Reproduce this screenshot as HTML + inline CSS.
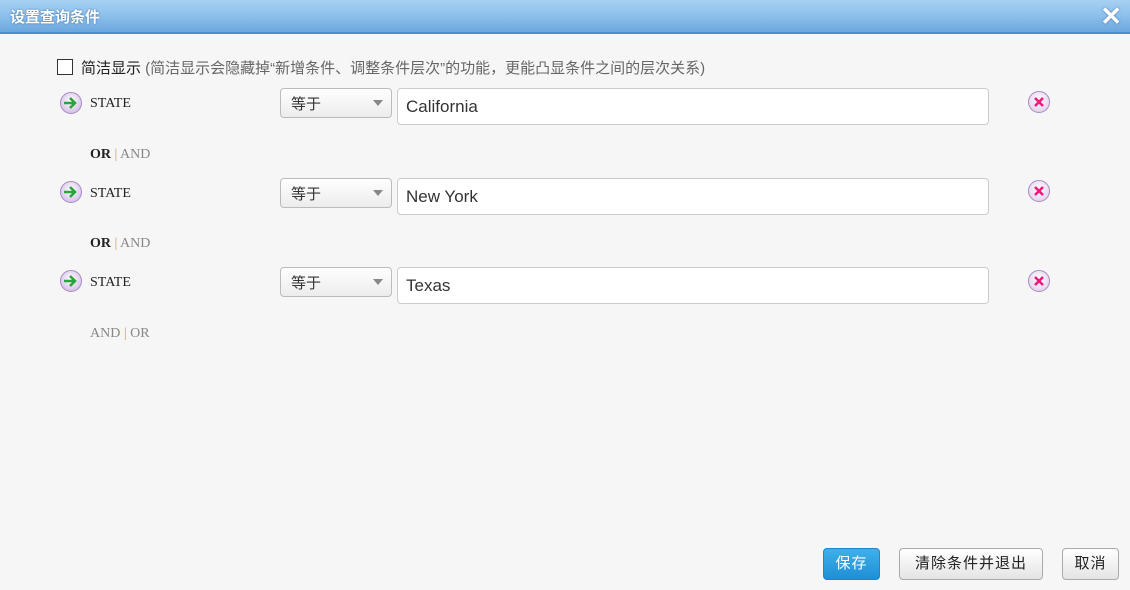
<!DOCTYPE html>
<html><head><meta charset="utf-8"><style>
body{margin:0;width:1130px;height:590px;background:#f6f6f6;font-family:"Liberation Sans","Noto Sans CJK SC",sans-serif;position:relative;overflow:hidden}
.hd{position:absolute;left:0;top:0;width:1130px;height:32px;background:linear-gradient(#a6d1f3,#8cc0ec 50%,#6aa7de);border-bottom:2px solid #4b8fd3}
.hd .t{position:absolute;left:10px;top:6px;color:#fff;font-size:15px;font-weight:bold;text-shadow:0 0 2px #3a6fa8}
.hd .x{position:absolute;right:8px;top:1px;color:#fff;font-size:26px;font-weight:bold;text-shadow:0 0 2px #3a6fa8}
.ab{position:absolute}
.cb{left:57px;top:59px;width:14px;height:14px;border:1px solid #333;background:#fff}
.lbl{font-family:"Liberation Serif","Noto Serif CJK SC",serif;font-size:14px;color:#222}
.ico{width:20px;height:20px;border-radius:50%;background:radial-gradient(circle at 50% 40%,#fff,#d9c7ea 70%,#b49bcf);border:1px solid #a68cc4}
.sel{width:112px;height:30px;border:1px solid #bbb;border-radius:4px;background:linear-gradient(#fff,#ececec);font-size:15px;color:#333;box-sizing:border-box;padding:4px 10px}
.sel:after{content:"";position:absolute;right:8px;top:11px;border:5px solid transparent;border-top:6px solid #888}
.inp{width:592px;height:37px;border:1px solid #ccc;border-radius:4px;background:#fff;box-sizing:border-box;padding:8px;font-size:17px;color:#333}
.del{width:20px;height:20px;border-radius:50%;background:radial-gradient(circle at 50% 40%,#fff,#e6d6ee 70%,#c3a8d6);border:1px solid #a68cc4}
.oa{font-family:"Liberation Serif",serif;font-size:14px;color:#888}
.oa b{color:#222}
.btn{height:32px;border:1px solid #aaa;border-radius:4px;background:linear-gradient(#fff,#e4e4e4);font-size:15px;color:#222;box-sizing:border-box;text-align:center;line-height:30px;letter-spacing:1px}
</style></head><body>
<div class="hd"><div class="t">设置查询条件</div><div class="x">✕</div></div>
<div class="ab cb"></div>
<div class="ab" style="left:81px;top:57px;font-size:15px;color:#222">简洁显示 <span style="color:#666">(简洁显示会隐藏掉“新增条件、调整条件层次”的功能，更能凸显条件之间的层次关系)</span></div>

<div class="ab ico" style="left:60px;top:92px"><svg width="20" height="20"><path d="M3 10h11M9 5l5 5-5 5" stroke="#2aa53a" stroke-width="2.6" fill="none"/></svg></div>
<div class="ab lbl" style="left:90px;top:96px">STATE</div>
<div class="ab sel" style="left:280px;top:88px">等于</div>
<div class="ab inp" style="left:397px;top:88px">California</div>
<div class="ab del" style="left:1028px;top:91px"><svg width="20" height="20"><path d="M6 6l8 8M14 6l-8 8" stroke="#ec1a7d" stroke-width="2.6"/></svg></div>
<div class="ab oa" style="left:90px;top:147px"><b>OR</b> <span style="color:#c9a26a">|</span> AND</div>

<div class="ab ico" style="left:60px;top:181px"><svg width="20" height="20"><path d="M3 10h11M9 5l5 5-5 5" stroke="#2aa53a" stroke-width="2.6" fill="none"/></svg></div>
<div class="ab lbl" style="left:90px;top:186px">STATE</div>
<div class="ab sel" style="left:280px;top:178px">等于</div>
<div class="ab inp" style="left:397px;top:178px">New York</div>
<div class="ab del" style="left:1028px;top:180px"><svg width="20" height="20"><path d="M6 6l8 8M14 6l-8 8" stroke="#ec1a7d" stroke-width="2.6"/></svg></div>
<div class="ab oa" style="left:90px;top:236px"><b>OR</b> <span style="color:#c9a26a">|</span> AND</div>

<div class="ab ico" style="left:60px;top:270px"><svg width="20" height="20"><path d="M3 10h11M9 5l5 5-5 5" stroke="#2aa53a" stroke-width="2.6" fill="none"/></svg></div>
<div class="ab lbl" style="left:90px;top:275px">STATE</div>
<div class="ab sel" style="left:280px;top:267px">等于</div>
<div class="ab inp" style="left:397px;top:267px">Texas</div>
<div class="ab del" style="left:1028px;top:270px"><svg width="20" height="20"><path d="M6 6l8 8M14 6l-8 8" stroke="#ec1a7d" stroke-width="2.6"/></svg></div>
<div class="ab oa" style="left:90px;top:326px">AND <b style="color:#c9a26a;font-weight:normal">|</b> OR</div>

<div class="ab btn" style="left:823px;top:548px;width:57px;background:linear-gradient(#3fb0ea,#1e8fd6);border-color:#1f86c8;color:#fff">保存</div>
<div class="ab btn" style="left:899px;top:548px;width:144px">清除条件并退出</div>
<div class="ab btn" style="left:1062px;top:548px;width:57px">取消</div>
</body></html>
